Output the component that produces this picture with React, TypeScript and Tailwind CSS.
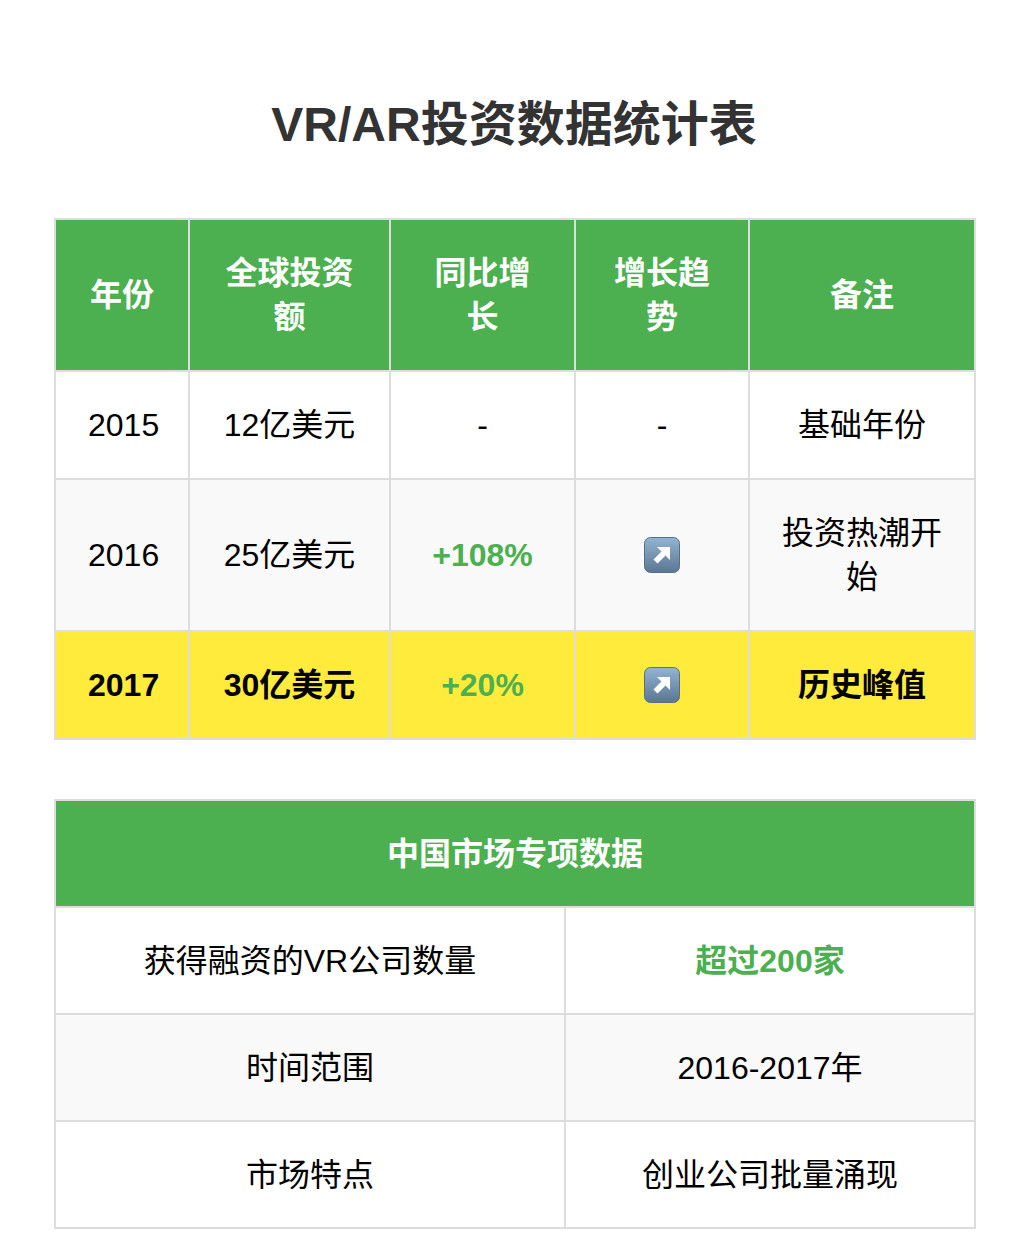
import React from "react";

function ArrowEmoji() {
  return (
    <svg width="36" height="36" viewBox="0 0 36 36" className="block mx-auto">
      <defs>
        <linearGradient id="ae" x1="0" y1="0" x2="0" y2="1">
          <stop offset="0" stopColor="#93b4d3" />
          <stop offset="1" stopColor="#5a7693" />
        </linearGradient>
      </defs>
      <rect x="0.5" y="0.5" width="35" height="35" rx="6" fill="url(#ae)" stroke="#56708a" strokeWidth="1" />
      <path d="M13 10 H26 V23 L21.5 18.5 L13.5 26.5 L9.5 22.5 L17.5 14.5 Z" fill="#fff" />
    </svg>
  );
}

const cell = "border-2 border-[#ddd] px-8 py-[31px] text-center leading-[44px]";
const cell2 = "border-2 border-[#ddd] px-8 py-[30.5px] text-center leading-[44px]";

const rows = [
  { year: "2015", amount: "12亿美元", growth: "-", trend: false, note: "基础年份", bg: "bg-white", bold: false },
  { year: "2016", amount: "25亿美元", growth: "+108%", trend: true, note: "投资热潮开始", bg: "bg-[#f9f9f9]", bold: false },
  { year: "2017", amount: "30亿美元", growth: "+20%", trend: true, note: "历史峰值", bg: "bg-[#ffeb3b]", bold: true },
];

const china = [
  { k: "获得融资的VR公司数量", v: "超过200家", hl: true, bg: "bg-white" },
  { k: "时间范围", v: "2016-2017年", hl: false, bg: "bg-[#f9f9f9]" },
  { k: "市场特点", v: "创业公司批量涌现", hl: false, bg: "bg-white" },
];

export default function App() {
  return (
    <div
      className="min-h-[1254px] bg-white text-black text-[32px]"
      style={{ fontFamily: '"Liberation Sans", "Noto Sans CJK SC", sans-serif' }}
    >
      <div className="w-[920px] ml-[54px] pt-[97px] pb-[24px]">
        <h1 className="text-center text-[48px] font-bold text-[#333] leading-[56px] mb-[65px]">
          VR/AR投资数据统计表
        </h1>

        <table className="w-full table-fixed border-collapse">
          <colgroup>
            <col className="w-[134px]" />
            <col className="w-[201px]" />
            <col className="w-[185px]" />
            <col className="w-[174px]" />
            <col className="w-[226px]" />
          </colgroup>
          <thead>
            <tr className="bg-[#4caf50] text-white font-bold">
              <th className={cell}>年份</th>
              <th className={cell}>全球投资额</th>
              <th className={cell}>同比增长</th>
              <th className={cell}>增长趋势</th>
              <th className={cell}>备注</th>
            </tr>
          </thead>
          <tbody>
            {rows.map((r) => (
              <tr key={r.year} className={`${r.bg} ${r.bold ? "font-bold" : ""}`}>
                <td className={cell}>{r.year}</td>
                <td className={cell}>{r.amount}</td>
                <td className={`${cell} ${r.growth !== "-" ? "text-[#4caf50] font-bold" : ""}`}>{r.growth}</td>
                <td className={cell}>{r.trend ? <ArrowEmoji /> : "-"}</td>
                <td className={cell}>{r.note}</td>
              </tr>
            ))}
          </tbody>
        </table>

        <table className="w-full table-fixed border-collapse mt-[59px]">
          <colgroup>
            <col className="w-[510px]" />
            <col className="w-[410px]" />
          </colgroup>
          <thead>
            <tr className="bg-[#4caf50] text-white font-bold">
              <th colSpan={2} className={cell2}>中国市场专项数据</th>
            </tr>
          </thead>
          <tbody>
            {china.map((r) => (
              <tr key={r.k} className={r.bg}>
                <td className={cell2}>{r.k}</td>
                <td className={`${cell2} ${r.hl ? "text-[#4caf50] font-bold" : ""}`}>{r.v}</td>
              </tr>
            ))}
          </tbody>
        </table>
      </div>
    </div>
  );
}
